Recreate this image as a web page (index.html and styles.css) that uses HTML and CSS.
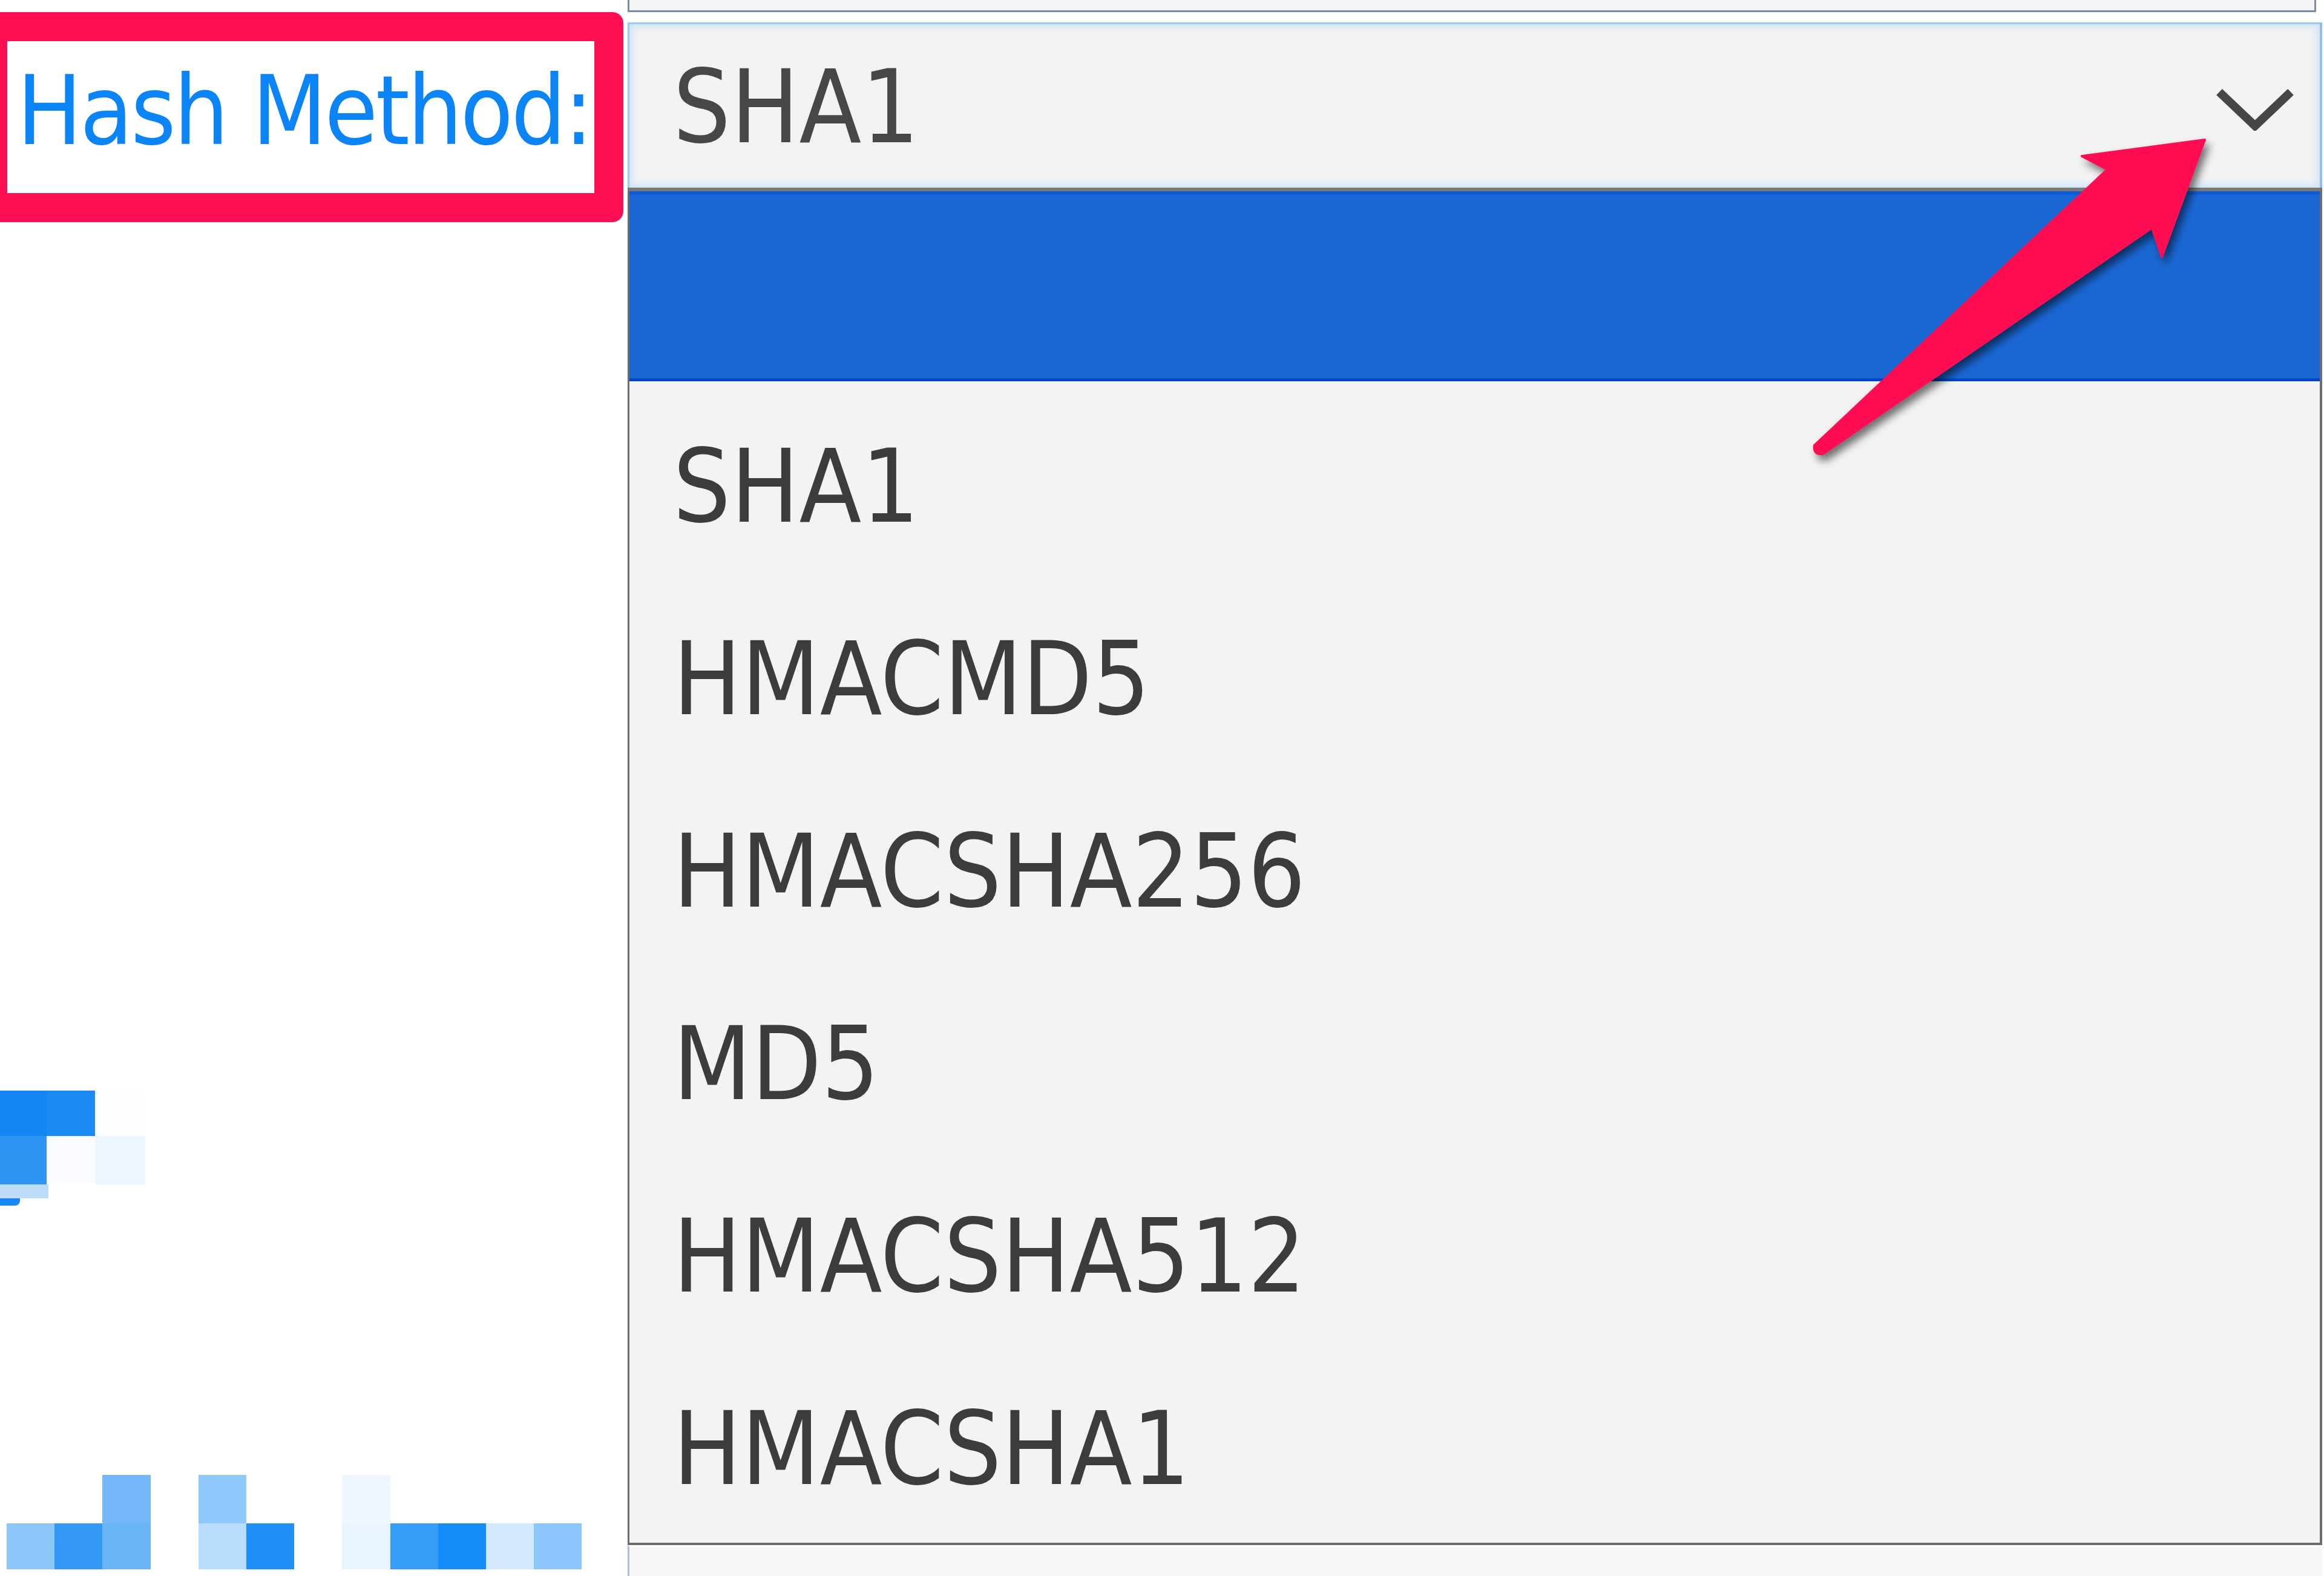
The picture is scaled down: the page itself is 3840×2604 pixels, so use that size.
FILE: index.html
```html
<!DOCTYPE html>
<html lang="en">
<head>
<meta charset="utf-8">
<title>Hash Method</title>
<link rel="stylesheet" href="styles.css">
</head>
<body>
<div class="page">
  <div class="left">
    <div class="label-area"><span class="label">Hash Method:</span></div>
    <div class="mosaic-top">
      <div class="cell t1"></div><div class="cell t2"></div><div class="cell t3"></div>
      <div class="cell t4"></div><div class="cell t5"></div><div class="cell t6"></div>
    </div>
    <div class="strip"></div>
    <div class="tiny"></div>
    <div class="mosaic-bottom">
      <div class="cell"></div><div class="cell"></div><div class="cell a3"></div><div class="cell"></div>
      <div class="cell a5"></div><div class="cell"></div><div class="cell"></div><div class="cell a8"></div>
      <div class="cell"></div><div class="cell"></div><div class="cell"></div><div class="cell"></div>
      <div class="cell b1"></div><div class="cell b2"></div><div class="cell b3"></div><div class="cell"></div>
      <div class="cell b5"></div><div class="cell b6"></div><div class="cell"></div><div class="cell b8"></div>
      <div class="cell b9"></div><div class="cell b10"></div><div class="cell b11"></div><div class="cell b12"></div>
    </div>
  </div>
  <div class="right">
    <div class="upper-box"></div>
    <div class="select">
      <span class="select-value">SHA1</span>
      <svg class="chevron" width="138" height="72" viewBox="0 0 138 72"><polyline points="10,8 69,64 128,8" fill="none" stroke="#464646" stroke-width="14"/></svg>
    </div>
    <ul class="list">
      <li class="item selected"></li>
      <li class="item">SHA1</li>
      <li class="item">HMACMD5</li>
      <li class="item">HMACSHA256</li>
      <li class="item">MD5</li>
      <li class="item">HMACSHA512</li>
      <li class="item">HMACSHA1</li>
    </ul>
    <div class="next-box"></div>
  </div>
  <div class="annot-frame"></div>
  <svg class="annot-arrow" width="3840" height="2604" viewBox="0 0 3840 2604">
    <defs>
      <filter id="sh" x="-20%" y="-20%" width="140%" height="140%">
        <feDropShadow dx="6" dy="9" stdDeviation="7" flood-color="#000" flood-opacity="0.55"/>
      </filter>
    </defs>
    <path d="M2998 736 L3482 280 L3440 258 L3643 231 L3572 424 L3556 376 L3012 750 Q2996 752 2998 736 Z" fill="#fe0f53" stroke="#fe0f53" stroke-width="4" stroke-linejoin="round" filter="url(#sh)"/>
  </svg>
</div>
</body>
</html>
```

FILE: styles.css
```css
html, body {
  margin: 0;
  padding: 0;
  background: #ffffff;
}

.page {
  position: relative;
  width: 3840px;
  height: 2604px;
  overflow: hidden;
  display: grid;
  grid-template-columns: 1037px 2803px;
  font-family: "DejaVu Sans Condensed", "DejaVu Sans", sans-serif;
  font-stretch: condensed;
}

/* left column */
.left {
  display: flex;
  flex-direction: column;
  align-items: flex-start;
}

.label-area {
  height: 310px;
  box-sizing: border-box;
  padding-top: 103px;
  padding-left: 28px;
  white-space: nowrap;
}

.label {
  font-size: 159px;
  line-height: 159px;
  letter-spacing: -3.5px;
  color: #0a84f6;
}

.cell {
  background: transparent;
}

.mosaic-top {
  margin-top: 1492px;
  display: grid;
  grid-template-columns: 77px 80px 83px;
  grid-template-rows: 75px 80px;
}
.t1 { background: #1486f3; }
.t2 { background: #1a8bf5; }
.t3 { background: #fbfdff; }
.t4 { background: #2e95f4; }
.t5 { background: #fafcff; }
.t6 { background: #edf5fe; }

.strip {
  width: 80px;
  height: 23px;
  background: #bcdcfa;
}
.tiny {
  width: 33px;
  height: 12px;
  background: #1a88f2;
  border-radius: 0 0 8px 0;
}

.mosaic-bottom {
  margin-top: 445px;
  margin-left: 11px;
  display: grid;
  grid-template-columns: repeat(12, 79.2px);
  grid-template-rows: 80px 76px;
}
.a3 { background: #75b8f9; }
.a5 { background: #90c8fb; }
.a8 { background: #eef6ff; }
.b1 { background: #8ec5fb; }
.b2 { background: #3399f5; }
.b3 { background: #6ab4f8; }
.b5 { background: #b8dcfc; }
.b6 { background: #2090f8; }
.b8 { background: #eaf4fe; }
.b9 { background: #379ef7; }
.b10 { background: #148cf8; }
.b11 { background: #d2e8fd; }
.b12 { background: #8cc5fb; }

/* right column */
.right {
  display: flex;
  flex-direction: column;
}

.upper-box {
  height: 20px;
  box-sizing: border-box;
  margin-right: 13px;
  background: #f5f5f5;
  border: 3px solid #7b8a9c;
  border-top: none;
}

.select {
  margin-top: 17px;
  height: 273px;
  box-sizing: border-box;
  margin-right: 3px;
  display: flex;
  align-items: flex-start;
  background: #f3f3f3;
  border: 3px solid #99c8f2;
  border-bottom: none;
  border-right: 4px solid #94bde4;
  box-shadow: inset 0 0 12px 5px #cfe4f9;
}

.select-value {
  padding-top: 40px;
  padding-left: 72px;
  font-size: 167px;
  line-height: 194px;
  color: #474747;
}

.chevron {
  margin-left: auto;
  margin-right: 38px;
  margin-top: 104px;
  display: block;
}

.list {
  list-style: none;
  margin: 0 3px 0 0;
  padding: 0 0 11px 0;
  background: #f3f3f3;
  border: 4px solid #6d6d6d;
  border-top-width: 6px;
  border-top-color: #7a7a7a;
  border-left-width: 3px;
}

.item {
  height: 318px;
  box-sizing: border-box;
  padding-top: 31px;
  padding-left: 72px;
  font-size: 167px;
  line-height: 287px;
  color: #3c3c3c;
  white-space: nowrap;
}

.item.selected {
  height: 314px;
  background: #1a67d4;
  border-top: 6px solid #0a5cd8;
  border-bottom: 5px solid #0048c8;
}

.next-box {
  flex: 1;
  background: #f7f7f7;
  border-left: 3px solid #a9bfdb;
  border-top: 3px solid #ffffff;
  margin-right: 3px;
}

/* annotations */
.annot-frame {
  position: absolute;
  left: -36px;
  top: 20px;
  width: 1066px;
  height: 347px;
  box-sizing: border-box;
  border: 48px solid #fe0f53;
  border-radius: 18px;
}

.annot-arrow {
  position: absolute;
  left: 0;
  top: 0;
  pointer-events: none;
}
```
